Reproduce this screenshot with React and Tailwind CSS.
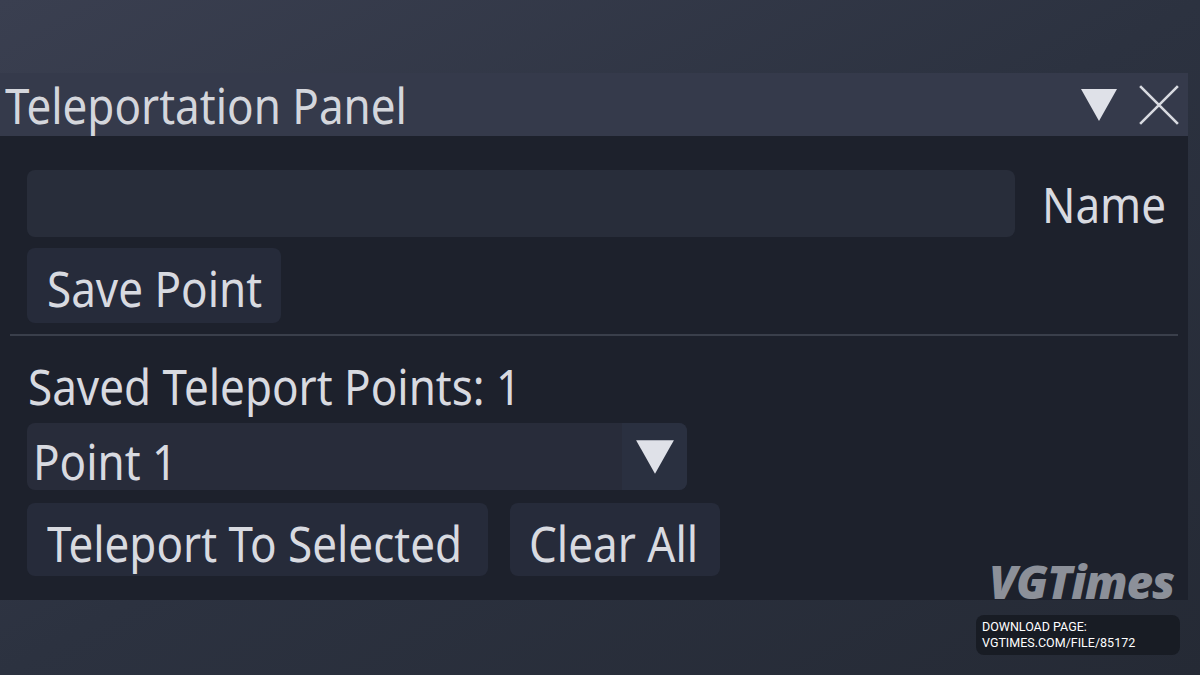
import React from "react";

const Label = ({ children, className = "" }) => (
  <span className={`inline-block origin-center scale-y-[1.12] whitespace-nowrap text-[44px] leading-none ${className}`}>
    {children}
  </span>
);

const TriangleDown = ({ className = "" }) => (
  <svg viewBox="0 0 40 36" className={className}>
    <polygon points="2,2 38,2 20,34" fill="#dfe1e8" />
  </svg>
);

const App = () => {
  return (
    <div
      className="relative h-[675px] w-[1200px] overflow-hidden bg-gradient-to-br from-[#3a3f50] via-[#2c3240] to-[#252a35] text-[#d8dae0]"
      style={{ fontFamily: '"Noto Sans", "Open Sans", sans-serif' }}
    >
      <div className="h-[73px]" />
      <div className="w-[1188px]">
        {/* title bar */}
        <div className="flex h-[63px] items-center justify-between bg-[#353a4b] pl-[5px] pr-[8px]">
          <Label className="text-[#d4d6dc]">Teleportation Panel</Label>
          <div className="flex items-center gap-[18px]">
            <TriangleDown className="h-[36px] w-[42px]" />
            <svg viewBox="0 0 40 40" className="h-[42px] w-[42px]">
              <path d="M2 2 L38 38 M38 2 L2 38" stroke="#d8dae0" strokeWidth="2.5" />
            </svg>
          </div>
        </div>
        {/* body */}
        <div className="h-[464px] bg-[#1d212c] px-[27px] pt-[34px]">
          <div className="flex items-center gap-[27px]">
            <div className="h-[67px] w-[988px] shrink-0 rounded-[8px] bg-[#282d3a]" />
            <Label className="text-[43px]">Name</Label>
          </div>
          <button className="mt-[11px] flex h-[75px] w-[254px] items-center rounded-[8px] bg-[#262b3a] pl-[20px] pt-[4px]">
            <Label>Save Point</Label>
          </button>
          <div className="-mx-[17px] mt-[11px] h-[2px] bg-[#3a3f4b]" />
          <div className="mt-[30px] flex h-[40px] items-center pl-[1px]">
            <Label>Saved Teleport Points: 1</Label>
          </div>
          <div className="mt-[17px] flex h-[67px] w-[660px] items-stretch rounded-[8px] bg-[#282c3a]">
            <div className="flex flex-1 items-center pl-[6px] pt-[8px]">
              <Label>Point 1</Label>
            </div>
            <div className="flex w-[65px] items-center justify-center rounded-r-[8px] bg-[#2a3040]">
              <TriangleDown className="h-[38px] w-[42px]" />
            </div>
          </div>
          <div className="mt-[13px] flex gap-[22px]">
            <button className="flex h-[73px] w-[461px] items-center rounded-[8px] bg-[#262b3a] pl-[20px] pt-[6px]">
              <Label>Teleport To Selected</Label>
            </button>
            <button className="flex h-[73px] w-[210px] items-center rounded-[8px] bg-[#262b3a] pl-[19px] pt-[6px]">
              <Label>Clear All</Label>
            </button>
          </div>
        </div>
      </div>

      {/* watermark */}
      <div className="absolute right-[20px] top-[558px] flex flex-col items-end">
        <span
          className="mr-[6px] text-[46px] font-extrabold italic leading-none tracking-tight text-[#8c9099]"
          style={{ fontFamily: '"Open Sans", "Noto Sans", sans-serif' }}
        >
          VGTimes
        </span>
        <div
          className="mt-[11px] w-[204px] rounded-[8px] bg-[#181c24] px-[6px] py-[4px] text-[12.5px] leading-[16px] text-white"
          style={{ fontFamily: "Roboto, sans-serif" }}
        >
          <div>DOWNLOAD PAGE:</div>
          <div>VGTIMES.COM/FILE/85172</div>
        </div>
      </div>
    </div>
  );
};

export default App;
